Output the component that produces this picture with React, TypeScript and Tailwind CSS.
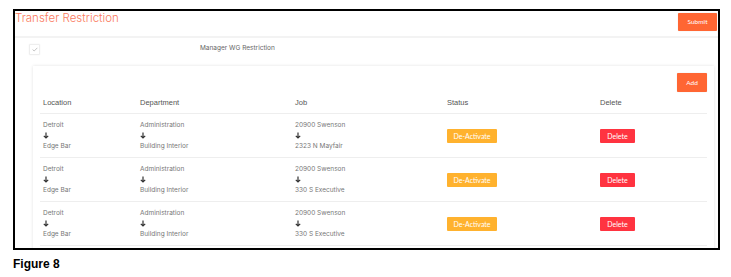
import React from 'react';

const rows = [
  { loc: ['Detroit', 'Edge Bar'], dept: ['Administration', 'Building Interior'], job: ['20900 Swenson', '2323 N Mayfair'] },
  { loc: ['Detroit', 'Edge Bar'], dept: ['Administration', 'Building Interior'], job: ['20900 Swenson', '330 S Executive'] },
  { loc: ['Detroit', 'Edge Bar'], dept: ['Administration', 'Building Interior'], job: ['20900 Swenson', '330 S Executive'] },
];

function DownArrow() {
  return (
    <svg width="6" height="7" viewBox="0 0 6 7">
      <path d="M3 0.5 V6 M0.8 3.8 L3 6 L5.2 3.8" stroke="#333" strokeWidth="1.2" fill="none" />
    </svg>
  );
}

function Stack({ items }: { items: string[] }) {
  return (
    <div className="flex flex-col text-[6.5px] leading-[10.5px] text-[#777]">
      <span>{items[0]}</span>
      <span className="h-[10.5px] flex items-center">
        <DownArrow />
      </span>
      <span>{items[1]}</span>
    </div>
  );
}

export default function App() {
  const body = { fontFamily: 'Inter, "Open Sans", sans-serif' };
  const header = { fontFamily: '"Liberation Sans", Arial, sans-serif' };
  const btn = { fontFamily: 'Lato, "Open Sans", sans-serif' };
  return (
    <div className="bg-white w-[731px] h-[277px] pt-[9px] pl-[13px] antialiased" style={body}>
      <div className="w-[707px] h-[241px] border-2 border-black overflow-hidden bg-white">
        <div className="flex items-start justify-between pr-[1px]">
          <h1 className="text-[11.5px] leading-[14px] text-[#fa7a5e] font-light" style={body}>
            Transfer Restriction
          </h1>
          <button
            className="mt-[2px] w-[39px] h-[18px] bg-[#ff6633] text-white text-[6.5px] rounded-[1px] shadow-[0_0_1px_rgba(0,0,0,0.2)]"
            style={btn}
          >
            Submit
          </button>
        </div>
        <div className="mt-[5px] h-[2px] bg-[#f3f3f3]" />
        <div className="flex items-center h-[22px] pl-[14px]">
          <div className="w-[11px] h-[11px] rounded-[1px] border border-[#eee] shadow-[0_0_1px_rgba(0,0,0,0.15)] flex items-center justify-center">
            <svg width="6" height="5" viewBox="0 0 6 5">
              <path d="M0.6 2.6 L2.2 4 L5.4 0.8" stroke="#bbb" strokeWidth="0.9" fill="none" />
            </svg>
          </div>
          <span className="ml-[160px] text-[6.5px] text-[#666]">Manager WG Restriction</span>
        </div>
        <div className="ml-[18px] mr-[4px] mt-[6px] bg-white shadow-[0_0_3px_rgba(0,0,0,0.12)] px-[7px] pt-[7px] h-[200px]">
          <div className="flex justify-end">
            <button
              className="w-[30px] h-[19px] bg-[#ff6633] text-white text-[6.5px] rounded-[1px] shadow-[0_0_1px_rgba(0,0,0,0.2)]"
              style={btn}
            >
              Add
            </button>
          </div>
          <div className="flex items-center h-[22px] pt-[1px] border-b-[1.5px] border-[#eeeeee] text-[7.5px] text-[#555]" style={header}>
            <div className="w-[100px] pl-[3px]">Location</div>
            <div className="w-[155px]">Department</div>
            <div className="w-[152px]">Job</div>
            <div className="w-[153px]">Status</div>
            <div className="flex-1">Delete</div>
          </div>
          {rows.map((r, i) => (
            <div key={i} className="flex items-center h-[44px] border-b border-[#eeeeee]">
              <div className="w-[100px] pl-[3px]">
                <Stack items={r.loc} />
              </div>
              <div className="w-[155px]">
                <Stack items={r.dept} />
              </div>
              <div className="w-[152px]">
                <Stack items={r.job} />
              </div>
              <div className="w-[153px] flex items-center">
                <button className="w-[50px] h-[14px] bg-[#ffb22e] text-white text-[7px] leading-[14px] rounded-[1px]" style={btn}>
                  De-Activate
                </button>
              </div>
              <div className="flex-1 flex items-center">
                <button className="w-[35px] h-[14px] bg-[#ff3340] text-white text-[7px] leading-[14px] rounded-[1px]" style={btn}>
                  Delete
                </button>
              </div>
            </div>
          ))}
        </div>
      </div>
      <div className="mt-[5px] text-[12px] font-bold text-black" style={header}>
        Figure 8
      </div>
    </div>
  );
}
